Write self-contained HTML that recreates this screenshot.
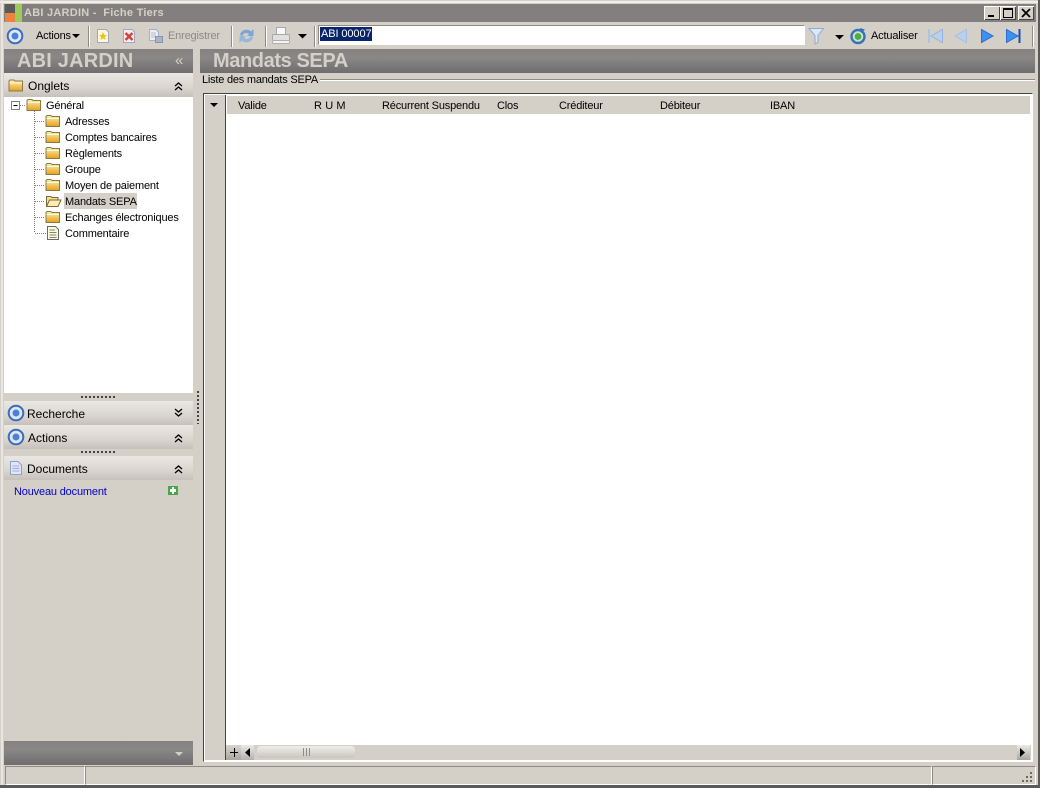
<!DOCTYPE html>
<html><head><meta charset="utf-8"><style>
html,body{margin:0;padding:0}
body{width:1040px;height:788px;overflow:hidden;position:relative;background:#d4d0c8;font:11px "Liberation Sans",sans-serif;color:#000}
.a,.t,svg{position:absolute}
.t{white-space:nowrap;line-height:14px}
.n{letter-spacing:-.17px}
.hd{position:absolute;left:4px;width:189px;height:24px;background:linear-gradient(#ebe8e3,#d9d5cf 60%,#c6c2bb)}
.bar{position:absolute;height:24px;background:linear-gradient(#858181,#8a8787 35%,#6f6d6d)}
.h{font-size:12px}
.sep{position:absolute;top:26px;width:1px;height:21px;background:#8f8c86;border-right:1px solid #fff}
.title{font:bold 20px "Liberation Sans",sans-serif;color:#d4d0c8;line-height:24px;position:absolute;white-space:nowrap}
</style></head><body>
<svg width="0" height="0" style="position:absolute"><defs>
<linearGradient id="fg" x1="0" y1="0" x2="0" y2="1"><stop offset="0" stop-color="#fff0b0"/><stop offset="1" stop-color="#e4a020"/></linearGradient>
<symbol id="folder" viewBox="0 0 16 14"><path d="M1 3.500V2.500L2 1.500H6L7 2.500H14.500V12.500H1Z" fill="url(#fg)" stroke="#8a7a4a"/><path d="M1.500 4.500H14" stroke="#fff8d8"/></symbol>
<symbol id="target" viewBox="0 0 18 18"><circle cx="9" cy="9" r="7.300" fill="#dfe6f4" stroke="#3a6cc0" stroke-width="2"/><circle cx="9" cy="9" r="3.500" fill="#4a80d8"/></symbol>
</defs></svg>

<!-- window frame -->
<div class="a" style="left:0;top:1px;width:1040px;height:2px;background:#f0eeea"></div>
<div class="a" style="left:1px;top:0;width:2px;height:788px;background:#e8e6e2"></div>
<div class="a" style="left:1038px;top:0;width:2px;height:788px;background:#5c5a58"></div>
<div class="a" style="left:0;top:785px;width:1040px;height:3px;background:#5c5a58"></div>

<!-- title bar -->
<div class="a" style="left:4px;top:4px;width:1032px;height:18px;background:#837f7f"></div>
<div class="a" style="left:5px;top:4px;width:10px;height:9px;background:#5a5a58"></div>
<div class="a" style="left:15px;top:4px;width:7px;height:18px;background:#9ccc58"></div>
<div class="a" style="left:5px;top:13px;width:10px;height:9px;background:#ec8440"></div>
<div class="t" style="left:24px;top:6px;font-weight:bold;color:#d4d0c8;letter-spacing:.25px">ABI JARDIN - &nbsp;Fiche Tiers</div>
<div class="a" style="left:984px;top:6px;width:16px;height:14px;background:#d4d0c8;box-shadow:inset 1px 1px #fff,inset -1px -1px #444"><div class="a" style="left:4px;top:9px;width:6px;height:2px;background:#000"></div></div>
<div class="a" style="left:1000px;top:6px;width:16px;height:14px;background:#d4d0c8;box-shadow:inset 1px 1px #fff,inset -1px -1px #444"><div class="a" style="left:3px;top:2px;width:8px;height:7px;border:1px solid #000;border-top-width:2px"></div></div>
<div class="a" style="left:1018px;top:6px;width:16px;height:14px;background:#d4d0c8;box-shadow:inset 1px 1px #fff,inset -1px -1px #444"><svg style="left:3px;top:2px" width="10" height="10"><path d="M1 1L9 9M9 1L1 9" stroke="#000" stroke-width="1.800"/></svg></div>

<!-- toolbar -->
<svg style="left:6px;top:27px" width="18" height="18"><use href="#target"/></svg>
<div class="t n" style="left:36px;top:29px">Actions</div>
<svg style="left:72px;top:34px" width="8" height="5"><path d="M0 0H8L4 4Z" fill="#000"/></svg>
<div class="sep" style="left:88px"></div>
<svg style="left:96px;top:28px" width="14" height="16"><path d="M1.500 1.500H10L12.500 4V14.500H1.500Z" fill="#fdf8d8" stroke="#a0a8c0"/><path d="M7 4L8.200 7H11L8.800 9L9.600 12L7 10.300L4.400 12L5.200 9L3 7H5.800Z" fill="#f0c020"/></svg>
<svg style="left:122px;top:28px" width="14" height="16"><path d="M1.500 1.500H10L12.500 4V14.500H1.500Z" fill="#f4eeee" stroke="#a0a8c0"/><path d="M3.500 5L10.500 12M10.500 5L3.500 12" stroke="#d84040" stroke-width="2.400"/></svg>
<svg style="left:148px;top:28px" width="16" height="16"><path d="M1.500 1.500H8L10.500 4V12.500H1.500Z" fill="#eceef2" stroke="#a8b0c0"/><path d="M3 5H8M3 7H8M3 9H8" stroke="#b4bccc"/><rect x="7.500" y="8.500" width="7" height="6" fill="#aab4c8" stroke="#8894ac"/></svg>
<div class="t n" style="left:168px;top:29px;color:#8c8a86">Enregistrer</div>
<div class="sep" style="left:231px"></div>
<svg style="left:238px;top:26px" width="17" height="20"><path d="M2 9C3 3.500 10 2 13 5.500L15.500 3V10H9L11 8C8.500 6 5 7 4.500 10Z" fill="#7ea4d4"/><path d="M15 11C14 16.500 7 18 4 14.500L1.500 17V10H8L6 12C8.500 14 12 13 12.500 10Z" fill="#96b6de"/></svg>
<div class="sep" style="left:265px"></div>
<svg style="left:271px;top:26px" width="20" height="20"><rect x="5.500" y="1.500" width="9" height="7" fill="#f8f8f8" stroke="#a8a8a8"/><rect x="1.500" y="8.500" width="17" height="6" rx="1" fill="#e0e0e0" stroke="#a8a8a8"/><rect x="1.500" y="14.500" width="17" height="3" rx="1" fill="#f4f4f4" stroke="#b0b0b0"/></svg>
<svg style="left:298px;top:34px" width="9" height="5"><path d="M0 0H9L4.500 4.500Z" fill="#000"/></svg>
<div class="sep" style="left:314px"></div>
<div class="a" style="left:318px;top:25px;width:485px;height:18px;background:#fff;border:1px solid #8f8c86;border-right-color:#fff;border-bottom-color:#fff"></div>
<div class="a" style="left:320px;top:27px;width:52px;height:14px;background:#0a246a;color:#fff;line-height:14px;white-space:nowrap;overflow:hidden;padding-left:1px;box-sizing:border-box;letter-spacing:-.1px">ABI 00007</div>
<svg style="left:808px;top:27px" width="18" height="18"><path d="M1 1.500H15.500L10 8.500V15.500L7 17V8.500Z" fill="#dce8f8" stroke="#8eaad4"/></svg>
<svg style="left:835px;top:35px" width="9" height="5"><path d="M0 0H9L4.500 4.500Z" fill="#000"/></svg>
<svg style="left:849px;top:27px" width="18" height="18"><circle cx="9" cy="9.500" r="6.500" fill="#cfe0d0" stroke="#3a70b8" stroke-width="2.400"/><circle cx="9" cy="9.500" r="3.400" fill="#48b040"/><path d="M11 1L16 2.500L12 6Z" fill="#3a70b8"/></svg>
<div class="t n" style="left:871px;top:29px">Actualiser</div>
<svg style="left:927px;top:28px" width="17" height="16"><path d="M2 1V15" stroke="#a8c4e8" stroke-width="2"/><path d="M15.500 1.500V14.500L4 8Z" fill="#b8d0ee" stroke="#94b4dc"/></svg>
<svg style="left:953px;top:28px" width="15" height="16"><path d="M13.500 1.500V14.500L2 8Z" fill="#b8d0ee" stroke="#a4c0e4"/></svg>
<svg style="left:980px;top:28px" width="15" height="16"><path d="M1.500 1.500V14.500L13 8Z" fill="#3c90f0" stroke="#2a70d0"/></svg>
<svg style="left:1005px;top:28px" width="17" height="16"><path d="M1.500 1.500V14.500L13 8Z" fill="#3c90f0" stroke="#2a70d0"/><path d="M14.500 1V15" stroke="#1850b0" stroke-width="2"/></svg>
<div class="sep" style="left:1032px"></div>

<!-- left panel -->
<div class="bar" style="left:4px;top:49px;width:189px"></div>
<div class="title" style="left:17px;top:49px;letter-spacing:.2px">ABI JARDIN</div>
<div class="t" style="left:175px;top:54px;color:#d4d0c8;font-size:15px">«</div>

<div class="hd" style="top:73px"></div>
<svg style="left:8px;top:78px" width="16" height="15"><use href="#folder"/></svg>
<div class="t h" style="left:28px;top:79px">Onglets</div>
<svg style="left:174px;top:82px" width="9" height="9"><path d="M1 4L4.500 1L8 4M1 8L4.500 5L8 8" fill="none" stroke="#000" stroke-width="1.300"/></svg>

<div class="a" style="left:4px;top:97px;width:189px;height:296px;background:#fff"></div>
<svg style="left:4px;top:97px" width="60" height="145">
<g stroke="#808080" stroke-dasharray="1 1" fill="none"><path d="M30.500 14V136"/><path d="M16 8.500H22M31 24.500H40M31 40.500H40M31 56.500H40M31 72.500H40M31 88.500H40M31 104.500H40M31 120.500H40M31 136.500H42"/></g>
<rect x="7.500" y="4.500" width="8" height="8" fill="#fff" stroke="#808080"/><path d="M9.500 8.500H13.500" stroke="#000"/>
</svg>
<svg style="left:26px;top:98px" width="16" height="14"><use href="#folder"/></svg>
<div class="t n" style="left:46px;top:99px">Général</div>
<svg style="left:45px;top:114px" width="16" height="14"><use href="#folder"/></svg>
<div class="t n" style="left:65px;top:115px">Adresses</div>
<svg style="left:45px;top:130px" width="16" height="14"><use href="#folder"/></svg>
<div class="t n" style="left:65px;top:131px">Comptes bancaires</div>
<svg style="left:45px;top:146px" width="16" height="14"><use href="#folder"/></svg>
<div class="t n" style="left:65px;top:147px">Règlements</div>
<svg style="left:45px;top:162px" width="16" height="14"><use href="#folder"/></svg>
<div class="t n" style="left:65px;top:163px">Groupe</div>
<svg style="left:45px;top:178px" width="16" height="14"><use href="#folder"/></svg>
<div class="t n" style="left:65px;top:179px">Moyen de paiement</div>
<svg style="left:45px;top:194px" width="17" height="14"><path d="M1.500 12.500V2.500H6L7 3.500H13V6" fill="#f8dc90" stroke="#7a6a3a"/><path d="M1.500 12.500L4.500 6H16L13 12.500Z" fill="#fdeeb0" stroke="#7a6a3a"/></svg>
<div class="a" style="left:64px;top:193px;width:73px;height:16px;background:#d4d0c8"></div>
<div class="t n" style="left:65px;top:195px">Mandats SEPA</div>
<svg style="left:45px;top:210px" width="16" height="14"><use href="#folder"/></svg>
<div class="t n" style="left:65px;top:211px">Echanges électroniques</div>
<svg style="left:46px;top:225px" width="14" height="16"><path d="M1.500 1.500H9.500L12.500 4.500V14.500H1.500Z" fill="#fdfbd8" stroke="#6a6a6a"/><path d="M3.500 5H9M3.500 7.500H10.500M3.500 10H10.500M3.500 12.500H10.500" stroke="#808080"/></svg>
<div class="t n" style="left:65px;top:227px">Commentaire</div>

<div class="a" style="left:81px;top:396px;width:36px;height:2px;background:repeating-linear-gradient(90deg,#444 0 2px,transparent 2px 4px)"></div>
<div class="hd" style="top:401px"></div>
<svg style="left:7px;top:404px" width="18" height="18"><use href="#target"/></svg>
<div class="t h" style="left:27px;top:407px">Recherche</div>
<svg style="left:174px;top:408px" width="9" height="9"><path d="M1 1L4.500 4L8 1M1 5L4.500 8L8 5" fill="none" stroke="#000" stroke-width="1.300"/></svg>
<div class="hd" style="top:425px"></div>
<svg style="left:7px;top:428px" width="18" height="18"><use href="#target"/></svg>
<div class="t h" style="left:28px;top:431px">Actions</div>
<svg style="left:174px;top:434px" width="9" height="9"><path d="M1 4L4.500 1L8 4M1 8L4.500 5L8 8" fill="none" stroke="#000" stroke-width="1.300"/></svg>
<div class="a" style="left:81px;top:451px;width:36px;height:2px;background:repeating-linear-gradient(90deg,#444 0 2px,transparent 2px 4px)"></div>
<div class="hd" style="top:456px"></div>
<svg style="left:9px;top:460px" width="14" height="16"><path d="M1.500 1.500H9L12.500 5V14.500H1.500Z" fill="#dfe6f8" stroke="#8ea0d0"/><path d="M3.500 6H10.500M3.500 8.500H10.500M3.500 11H10.500" stroke="#9cacdc"/></svg>
<div class="t h" style="left:27px;top:462px">Documents</div>
<svg style="left:174px;top:465px" width="9" height="9"><path d="M1 4L4.500 1L8 4M1 8L4.500 5L8 8" fill="none" stroke="#000" stroke-width="1.300"/></svg>
<div class="t n" style="left:14px;top:485px;color:#0000c0">Nouveau document</div>
<div class="a" style="left:168px;top:486px;width:10px;height:9px;background:#48a848"><div class="a" style="left:4px;top:1px;width:2px;height:7px;background:#fff"></div><div class="a" style="left:2px;top:3px;width:6px;height:3px;background:#fff"></div></div>

<div class="bar" style="left:4px;top:741px;width:189px"></div>
<svg style="left:175px;top:752px" width="9" height="5"><path d="M0 0H8L4 4Z" fill="#d4d0c8"/></svg>

<!-- splitter -->
<div class="a" style="left:197px;top:391px;width:2px;height:33px;background:repeating-linear-gradient(#444 0 2px,transparent 2px 4px)"></div>

<!-- right header -->
<div class="bar" style="left:200px;top:49px;width:835px"></div>
<div class="title" style="left:213px;top:49px;letter-spacing:-.4px">Mandats SEPA</div>
<div class="t" style="left:202px;top:73px;letter-spacing:-.22px">Liste des mandats SEPA</div>
<div class="a" style="left:320px;top:79px;width:715px;height:1px;background:#8f8c86;border-bottom:1px solid #fff"></div>

<!-- grid -->
<div class="a" style="left:203px;top:93px;width:830px;height:669px;background:#fff;border-top:1px solid #444;border-left:1px solid #444;border-right:1px solid #fff;border-bottom:1px solid #fff;box-sizing:border-box;box-shadow:inset 1px 1px #fff"></div>
<div class="a" style="left:205px;top:95px;width:20px;height:665px;background:#d4d0c8"></div>
<div class="a" style="left:225px;top:95px;width:1px;height:665px;background:#444"></div>
<div class="a" style="left:227px;top:96px;width:803px;height:18px;background:#d4d0c8"></div>
<svg style="left:210px;top:103px" width="9" height="5"><path d="M0 0H8L4 4Z" fill="#000"/></svg>
<div class="t n" style="left:238px;top:99px">Valide</div>
<div class="t" style="left:314px;top:99px;letter-spacing:.1px">R U M</div>
<div class="t n" style="left:382px;top:99px">Récurrent Suspendu</div>
<div class="t n" style="left:497px;top:99px">Clos</div>
<div class="t n" style="left:559px;top:99px">Créditeur</div>
<div class="t n" style="left:660px;top:99px">Débiteur</div>
<div class="t n" style="left:770px;top:99px">IBAN</div>

<!-- scrollbar -->
<div class="a" style="left:226px;top:745px;width:805px;height:15px;background:#d4d0c8"></div>
<div class="a" style="left:226px;top:745px;width:15px;height:15px;background:linear-gradient(#d8d5cf,#a8a5a0)"></div>
<div class="a" style="left:230px;top:752px;width:8px;height:1px;background:#000"></div>
<div class="a" style="left:234px;top:748px;width:1px;height:9px;background:#000"></div>
<div class="a" style="left:241px;top:745px;width:13px;height:15px;background:linear-gradient(#eceae6,#b4b1ac)"></div>
<svg style="left:245px;top:748px" width="6" height="9"><path d="M5 0V9L0 4.500Z" fill="#000"/></svg>
<div class="a" style="left:257px;top:746px;width:98px;height:12px;border-radius:4px;background:linear-gradient(#f0eeea,#c8c5be)"></div>
<div class="a" style="left:303px;top:748px;width:7px;height:8px;background:repeating-linear-gradient(90deg,#8f8c86 0 1px,transparent 1px 3px)"></div>
<div class="a" style="left:1017px;top:745px;width:13px;height:15px;background:linear-gradient(#eceae6,#a8a5a0)"></div>
<svg style="left:1020px;top:748px" width="6" height="9"><path d="M0 0V9L5 4.500Z" fill="#000"/></svg>

<!-- status bar -->
<div class="a" style="left:5px;top:766px;width:78px;height:17px;border:1px solid #8f8c86;border-right-color:#fff;border-bottom-color:#fff"></div>
<div class="a" style="left:85px;top:766px;width:845px;height:17px;border:1px solid #8f8c86;border-right-color:#fff;border-bottom-color:#fff"></div>
<div class="a" style="left:932px;top:766px;width:102px;height:17px;border:1px solid #8f8c86;border-right-color:#fff;border-bottom-color:#fff"></div>
<svg style="left:1021px;top:771px" width="12" height="12" fill="#6a6864"><rect x="9" y="1" width="2" height="2"/><rect x="5" y="5" width="2" height="2"/><rect x="9" y="5" width="2" height="2"/><rect x="1" y="9" width="2" height="2"/><rect x="5" y="9" width="2" height="2"/><rect x="9" y="9" width="2" height="2"/></svg>
</body></html>
